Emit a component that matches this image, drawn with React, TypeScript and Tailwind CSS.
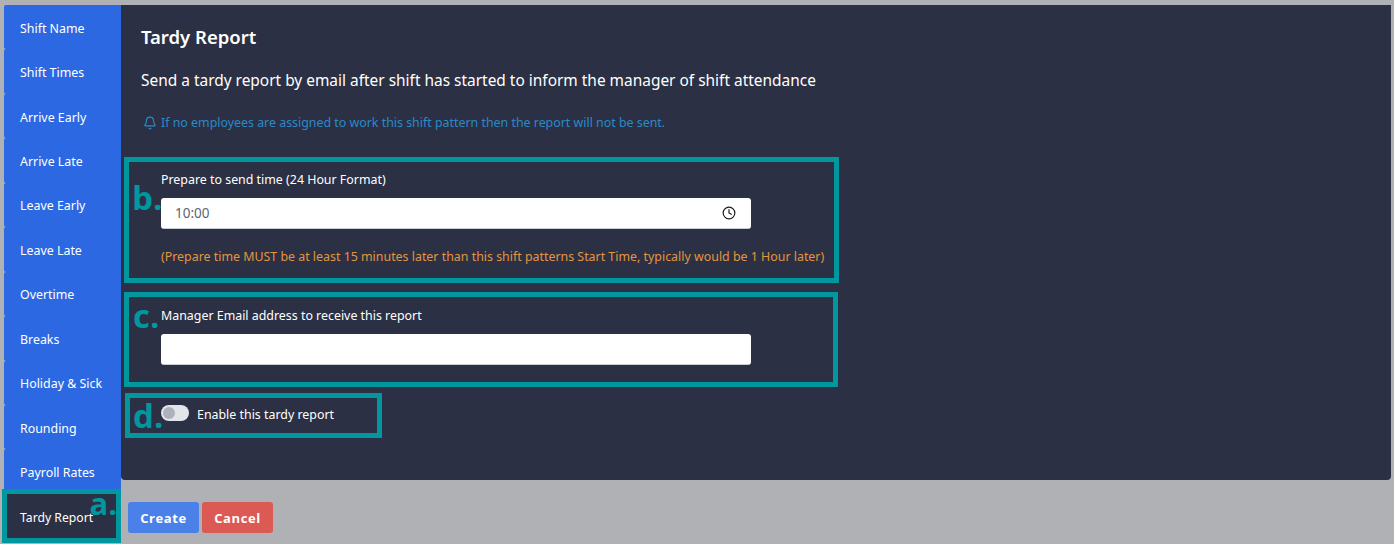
import { Bell, Clock } from "lucide-react";

const items = ["Shift Name","Shift Times","Arrive Early","Arrive Late","Leave Early","Leave Late","Overtime","Breaks","Holiday & Sick","Rounding","Payroll Rates"];

function Letter({ children, className }: { children: string; className: string }) {
  return <span className={"absolute font-['Open_Sans',sans-serif] font-bold text-[#00979f] leading-none " + className}>{children}</span>;
}

export default function App() {
  return (
    <div className="w-[1394px] h-[544px] overflow-hidden bg-[#afb1b5] flex pt-[5px] pl-[4px] font-['Noto_Sans',sans-serif] text-[12.4px] text-white">
      <nav className="w-[117px] shrink-0 flex flex-col">
        {items.map((t) => (
          <div key={t} className="h-[44.45px] shrink-0 bg-[#2d68e3] rounded-l-[2px] pl-4 pt-[3.5px] flex items-center">{t}</div>
        ))}
        <div className="relative -ml-[2px] w-[119px] h-[54px] -mt-[5px] bg-[#2b3044] border-[5px] border-[#00979f] pl-[13px] pt-[5px] flex items-center">
          <span className="whitespace-nowrap text-[12.2px]">Tardy Report</span>
          <Letter className="text-[31px] right-[-1px] top-[-6px]">a.</Letter>
        </div>
      </nav>
      <main className="flex-1 flex flex-col pr-[3px]">
        <section className="h-[475px] bg-[#2b3044] rounded-b-[4px] pl-[3px] flex flex-col">
          <h1 className="ml-[17px] mt-[19px] text-[18.5px] leading-[26px] font-semibold">Tardy Report</h1>
          <p className="ml-[17px] mt-[18px] text-[15.45px] leading-[24px]">Send a tardy report by email after shift has started to inform the manager of shift attendance</p>
          <p className="ml-[19px] mt-[22px] flex items-center gap-[4px] leading-[18px] text-[#2a8ac9]">
            <Bell size={14} strokeWidth={2} />
            If no employees are assigned to work this shift pattern then the report will not be sent.
          </p>
          <div className="relative mt-[25px] w-[715px] h-[126px] border-[5px] border-[#00979f] pl-[32px] pt-[9px]">
            <Letter className="text-[33px] left-[3px] top-[19px]">b.</Letter>
            <label className="block leading-[18px]">Prepare to send time (24 Hour Format)</label>
            <div className="mt-[9px] w-[590px] h-[31px] bg-white rounded-[3px] border-b border-[#c8ccd4] flex items-center justify-between pl-[14px] pr-[15px] text-[#5c6470] text-[13.5px]">
              <span>10:00</span>
              <Clock size={14} strokeWidth={2} className="text-[#1a1a1a]" />
            </div>
            <p className="mt-[19px] leading-[18px] text-[#e2963f] whitespace-nowrap">(Prepare time MUST be at least 15 minutes later than this shift patterns Start Time, typically would be 1 Hour later)</p>
          </div>
          <div className="relative mt-[9px] w-[714px] h-[95px] border-[5px] border-[#00979f] pl-[32px] pt-[10px]">
            <Letter className="text-[33px] left-[4px] top-[2px]">c.</Letter>
            <label className="block leading-[18px]">Manager Email address to receive this report</label>
            <div className="mt-[9px] w-[590px] h-[31px] bg-white rounded-[3px] border-b border-[#c8ccd4]" />
          </div>
          <div className="relative mt-[6px] ml-[1px] w-[257px] h-[45px] border-[5px] border-[#00979f] pl-[31px] flex items-start">
            <Letter className="text-[33px] left-[3px] top-[1px]">d.</Letter>
            <span className="mt-[7px] w-[28px] h-[16px] rounded-full bg-[#e2e5ea] flex items-center pl-[2px] shrink-0">
              <span className="w-[12px] h-[12px] rounded-full bg-[#adb2ba]" />
            </span>
            <span className="ml-[8px] mt-[8px] leading-[18px]">Enable this tardy report</span>
          </div>
        </section>
        <div className="mt-[22px] ml-[7px] flex gap-[3px] font-['Open_Sans',sans-serif] font-bold text-[13px] tracking-[0.6px]">
          <button className="w-[71px] h-[31px] pt-[2px] rounded-[3px] bg-[#4a80e8] text-white">Create</button>
          <button className="w-[71px] h-[31px] pt-[2px] rounded-[3px] bg-[#db5a54] text-white">Cancel</button>
        </div>
      </main>
    </div>
  );
}
